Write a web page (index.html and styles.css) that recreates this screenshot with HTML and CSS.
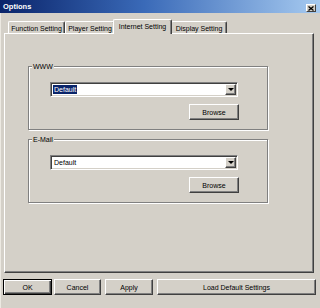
FILE: index.html
```html
<!DOCTYPE html>
<html lang="en">
<head>
    <meta charset="UTF-8">
    <title>Options</title>
    <link rel="stylesheet" href="styles.css">
</head>
<body>

    <div class="window">
        <div class="titlebar">
            <span class="title">Options</span>
            <button class="close-btn">
                <svg width="6" height="5" viewBox="0 0 6 5"><path d="M0.5 0.5 L5.5 4.5 M5.5 0.5 L0.5 4.5" stroke="#000" stroke-width="1.3"/></svg>
            </button>
        </div>

        <div class="tabs">
            <div class="tab tab-function">Function Setting</div>
            <div class="tab tab-player">Player Setting</div>
            <div class="tab tab-internet active">Internet Setting</div>
            <div class="tab tab-display">Display Setting</div>
        </div>

        <div class="panel">
            <div class="group">
                <span class="legend">WWW</span>
                <div class="combo">
                    <span class="combo-text selected">Default</span>
                    <span class="combo-arrow"><i></i></span>
                </div>
                <div class="row-right">
                    <button class="btn browse-btn">Browse</button>
                </div>
            </div>

            <div class="group group-mail">
                <span class="legend">E-Mail</span>
                <div class="combo">
                    <span class="combo-text">Default</span>
                    <span class="combo-arrow"><i></i></span>
                </div>
                <div class="row-right">
                    <button class="btn browse-btn">Browse</button>
                </div>
            </div>
        </div>

        <div class="buttons">
            <button class="btn btn-ok">OK</button>
            <button class="btn btn-cancel">Cancel</button>
            <button class="btn btn-apply">Apply</button>
            <button class="btn btn-load">Load Default Settings</button>
        </div>
    </div>

</body>
</html>
```

FILE: styles.css
```css
* {
    margin: 0;
    padding: 0;
    box-sizing: border-box;
    font-family: "Liberation Sans", Arial, sans-serif;
}

body {
    width: 320px;
    height: 308px;
    background: #d4d0c8;
    color: #000;
    font-size: 7px;
    overflow: hidden;
}

.window {
    display: flex;
    flex-direction: column;
    height: 308px;
    border-left: 1px solid #ece9e2;
}

/* title bar */
.titlebar {
    display: flex;
    justify-content: space-between;
    align-items: flex-start;
    height: 13px;
    margin-left: -1px;
    padding: 0 4px 0 3px;
    background: linear-gradient(to right, #0a246a, #3a6ab8 45%, #a6caf0);
}

.title {
    align-self: center;
    color: #fff;
    font-weight: bold;
    font-size: 7.5px;
    line-height: 9px;
}

.close-btn {
    display: flex;
    align-items: center;
    justify-content: center;
    width: 10px;
    height: 8px;
    margin-top: 4px;
    background: #d4d0c8;
    border: 1px solid;
    border-color: #fff #404040 #404040 #fff;
}

/* tabs */
.tabs {
    display: flex;
    align-items: flex-end;
    height: 14px;
    margin-top: 6px;
    padding-left: 7px;
}

.tab {
    height: 12px;
    padding-top: 2px;
    line-height: 9px;
    text-align: center;
    white-space: nowrap;
    background: #d4d0c8;
    border-top: 1px solid #fff;
    border-left: 1px solid #fff;
    border-right: 1px solid #404040;
    border-radius: 2px 2px 0 0;
    box-shadow: inset -1px 0 #808080;
}

.tab-function { width: 57px; }
.tab-player { width: 50px; }
.tab-display { width: 56px; }

.tab.active {
    position: relative;
    z-index: 1;
    width: 59px;
    height: 15px;
    margin: 0 -1px -1px -2px;
    padding-top: 2px;
}

/* panel */
.panel {
    height: 240px;
    margin: 0 6px 0 3px;
    padding: 32px 0 0 23px;
    border-top: 1px solid #fff;
    border-left: 1px solid #fff;
    border-right: 1px solid #404040;
    border-bottom: 1px solid #404040;
    box-shadow: inset -1px -1px #808080;
}

.group {
    width: 240px;
    padding: 0 29px 9px 21px;
    border: 1px solid #808080;
    box-shadow: inset 1px 1px #fff, 1px 1px #fff;
}

.group-mail {
    margin-top: 9px;
}

.legend {
    display: block;
    width: fit-content;
    height: 9px;
    margin: -5px 0 0 -18px;
    padding: 0 1px;
    line-height: 9px;
    background: #d4d0c8;
}

/* combo box */
.combo {
    display: flex;
    align-items: center;
    justify-content: space-between;
    height: 15px;
    margin-top: 11px;
    background: #fff;
    border: 1px solid;
    border-color: #808080 #fff #fff #808080;
    box-shadow: inset 1px 1px #404040, inset -1px -1px #d4d0c8;
}

.combo-text {
    margin-left: 2px;
    padding: 0 1px;
    line-height: 9px;
}

.combo-text.selected {
    background: #0a246a;
    color: #fff;
}

.combo-arrow {
    display: flex;
    align-items: center;
    justify-content: center;
    width: 11px;
    height: 11px;
    margin-right: 1px;
    background: #d4d0c8;
    border: 1px solid;
    border-color: #fff #404040 #404040 #fff;
    box-shadow: inset -1px -1px #808080;
}

.combo-arrow i {
    width: 0;
    height: 0;
    border-left: 3px solid transparent;
    border-right: 3px solid transparent;
    border-top: 3px solid #000;
}

.row-right {
    display: flex;
    justify-content: flex-end;
    margin-top: 7px;
    margin-right: -1px;
}

/* buttons */
.btn {
    height: 16px;
    font-size: 7px;
    line-height: 9px;
    color: #000;
    background: #d4d0c8;
    border: 1px solid;
    border-color: #fff #404040 #404040 #fff;
    box-shadow: inset -1px -1px #808080;
}

.browse-btn {
    width: 50px;
}

.buttons {
    display: flex;
    margin-top: 6px;
    padding-left: 2px;
}

.btn-ok {
    width: 49px;
    margin-right: 2px;
    border: 1px solid #000;
    box-shadow: inset 1px 1px #fff, inset -1px -1px #404040, inset -2px -2px #808080;
}

.btn-cancel {
    width: 47px;
    margin-right: 4px;
}

.btn-apply {
    width: 48px;
    margin-right: 4px;
}

.btn-load {
    width: 159px;
}
```
